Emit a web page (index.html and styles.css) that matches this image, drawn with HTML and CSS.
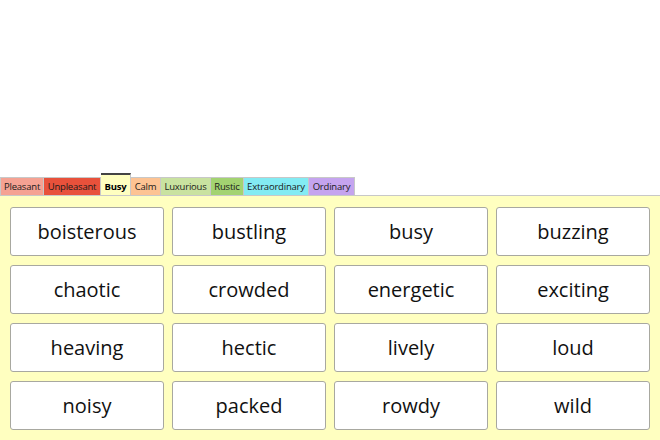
FILE: index.html
```html
<!DOCTYPE html>
<html lang="en">
<head>
  <meta charset="UTF-8" />
  <title>Word Bank</title>
  <link rel="stylesheet" href="styles.css">
</head>
<body>

<div class="app">
  <div class="tabs">
    <div class="tab pleasant">Pleasant</div>
    <div class="tab unpleasant">Unpleasant</div>
    <div class="tab busy active">Busy</div>
    <div class="tab calm">Calm</div>
    <div class="tab luxurious">Luxurious</div>
    <div class="tab rustic">Rustic</div>
    <div class="tab extraordinary">Extraordinary</div>
    <div class="tab ordinary">Ordinary</div>
  </div>

  <div class="panel">
    <div class="word">boisterous</div>
    <div class="word">bustling</div>
    <div class="word">busy</div>
    <div class="word">buzzing</div>
    <div class="word">chaotic</div>
    <div class="word">crowded</div>
    <div class="word">energetic</div>
    <div class="word">exciting</div>
    <div class="word">heaving</div>
    <div class="word">hectic</div>
    <div class="word">lively</div>
    <div class="word">loud</div>
    <div class="word">noisy</div>
    <div class="word">packed</div>
    <div class="word">rowdy</div>
    <div class="word">wild</div>
  </div>
</div>

</body>
</html>
```

FILE: styles.css
```css
body {
  margin: 0;
  font-family: "Open Sans", "Noto Sans", sans-serif;
  background: white;
  color: #111;
}

.app {
  height: 440px;
  overflow: hidden;
  display: flex;
  flex-direction: column;
}

.tabs {
  display: flex;
  align-items: flex-end;
  margin-top: 173px;
  height: 22px;
}

.tab {
  height: 18px;
  box-sizing: border-box;
  font-size: 9.5px;
  letter-spacing: -0.2px;
  text-align: center;
  line-height: 18px;
  color: #1a1a1a;
  border: 1px solid #c8c8c8;
  border-bottom: none;
}

.tab + .tab {
  border-left: none;
}

.tab.active {
  height: 23px;
  margin-bottom: -1px;
  line-height: 24px;
  border-top: 2px solid #444;
  font-weight: bold;
  color: #000;
}

.pleasant { background: #f5a293; width: 44px; }
.unpleasant { background: #e8513b; width: 57px; }
.busy { background: #ffffc0; width: 30px; }
.calm { background: #fdc393; width: 30px; }
.luxurious { background: #c9e2a0; width: 50px; }
.rustic { background: #a3d371; width: 33px; }
.extraordinary { background: #83ebf3; width: 65px; }
.ordinary { background: #c5a4ef; width: 46px; }

.panel {
  flex: 1;
  background: #ffffc0;
  border-top: 1px solid #c8c8c8;
  padding: 11px 11px 0 10px;
  display: grid;
  grid-template-columns: repeat(4, 154px);
  grid-auto-rows: 49px;
  column-gap: 8px;
  row-gap: 9px;
  align-content: start;
}

.word {
  background: white;
  border: 1px solid #a8a8a0;
  border-radius: 3px;
  display: flex;
  align-items: center;
  justify-content: center;
  font-size: 20px;
  color: #111;
}
```
